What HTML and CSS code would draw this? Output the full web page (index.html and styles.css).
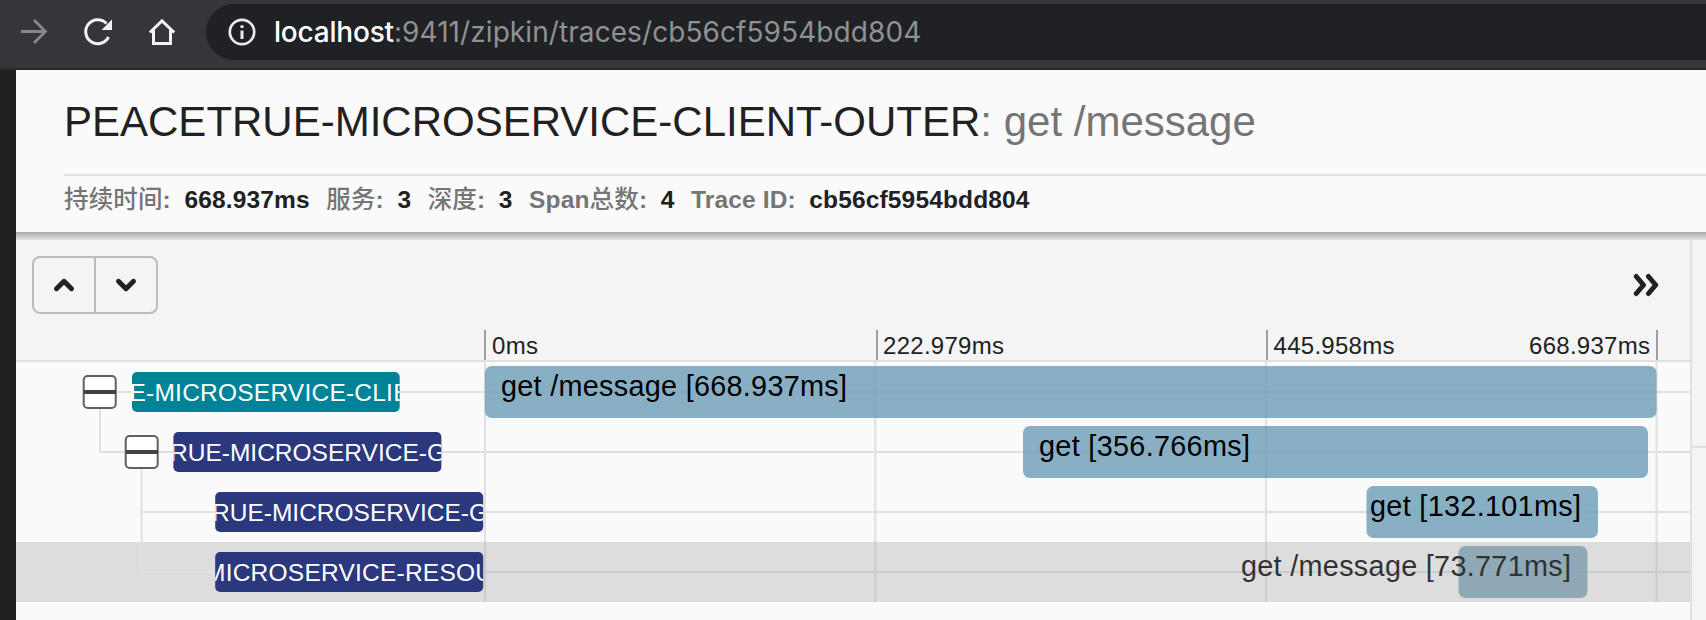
FILE: index.html
```html
<!DOCTYPE html>
<html lang="zh-CN">
<head>
<meta charset="utf-8">
<title>Zipkin</title>
<link rel="stylesheet" href="styles.css">
</head>
<body>
<div class="browser-bar">
  <svg class="nav-icons" width="206" height="68" viewBox="0 0 206 68" fill="none">
    <path d="M21 31.5H45M34 20L45.5 31.5L34 43" stroke="#87888a" stroke-width="2.8"/>
    <path d="M108.500 37A12 12 0 1 1 106.500 23.500" stroke="#f1f3f4" stroke-width="3"/>
    <path d="M112 19.500V30H101.500Z" fill="#f1f3f4"/>
    <path d="M149.800 32.500L162 20.800L174.200 32.500M153.500 30V43.500H170.500V30" stroke="#f1f3f4" stroke-width="3"/>
  </svg>
  <div class="omnibox">
    <svg width="28" height="28" viewBox="0 0 28 28" fill="none" stroke="#e8eaed">
      <circle cx="14" cy="14" r="12.200" stroke-width="2.700"/>
      <path d="M14 12.500V21M14 7.200V10" stroke-width="3"/>
    </svg>
    <div class="url"><span class="host">localhost</span><span class="path">:9411/zipkin/traces/cb56cf5954bdd804</span></div>
  </div>
</div>
<div class="app">
  <div class="sidebar"></div>
  <main class="content">
    <header class="trace-header">
      <h1 class="title"><span class="svc">PEACETRUE-MICROSERVICE-CLIENT-OUTER</span><span class="op">: get /message</span></h1>
      <dl class="meta">
        <div class="item"><dt><span class="cjk">持续时间</span>:</dt><dd>668.937ms</dd></div>
        <div class="item"><dt><span class="cjk">服务</span>:</dt><dd>3</dd></div>
        <div class="item"><dt><span class="cjk">深度</span>:</dt><dd>3</dd></div>
        <div class="item"><dt>Span<span class="cjk">总数</span>:</dt><dd>4</dd></div>
        <div class="item"><dt>Trace ID:</dt><dd>cb56cf5954bdd804</dd></div>
      </dl>
    </header>
    <div class="body">
      <section class="timeline">
        <div class="toolbar">
          <div class="button-group">
            <button class="btn" aria-label="Up"><svg width="24" height="18" viewBox="0 0 24 18"><path d="M4.500 12.700L12 5.300L19.500 12.700"/></svg></button>
            <button class="btn" aria-label="Down"><svg width="24" height="18" viewBox="0 0 24 18"><path d="M4.500 5.300L12 12.700L19.500 5.300"/></svg></button>
          </div>
          <svg class="expand" width="30" height="24" viewBox="0 0 30 24"><path d="M5.300 3.500L12.500 12L5.300 20.500M17.500 3.500L24.700 12L17.500 20.500"/></svg>
        </div>
        <svg class="chart" width="1674" height="290" viewBox="16 330 1674 290">
          <defs>
            <clipPath id="c1"><rect x="132" y="372" width="267.700" height="40" rx="5"/></clipPath>
            <clipPath id="c2"><rect x="173.400" y="432" width="268" height="40" rx="5"/></clipPath>
            <clipPath id="c3"><rect x="215.200" y="492" width="268" height="40" rx="5"/></clipPath>
            <clipPath id="c4"><rect x="215.200" y="552" width="268" height="40" rx="5"/></clipPath>
          </defs>
          <rect x="16" y="360" width="1674" height="260" fill="#fafafa"/>
          <path class="grid" d="M16 361H1690M485 362V602M875.300 362V602M1266 362V602M1656.500 362V602"/>
          <path class="grid" d="M100 392H1690M100 452H1690M142 512H1690M485 572H1690"/>
          <path class="tick" d="M485 330V360M877 330V360M1267 330V360M1657 330V360"/>
          <g class="tick-label">
            <text x="492" y="354" textLength="46">0ms</text>
            <text x="883" y="354" textLength="121">222.979ms</text>
            <text x="1273.500" y="354" textLength="121">445.958ms</text>
            <text x="1529" y="354" textLength="121">668.937ms</text>
          </g>
          <g class="bars">
            <rect x="484.800" y="366" width="1171.800" height="52" rx="7"/>
            <rect x="1023" y="426" width="625" height="52" rx="7"/>
            <rect x="1366.500" y="486" width="231.500" height="52" rx="7"/>
            <rect x="1458.500" y="546" width="129" height="52" rx="7"/>
          </g>
          <g class="bar-label">
            <text x="501" y="396" textLength="346">get /message [668.937ms]</text>
            <text x="1039" y="456" textLength="211">get [356.766ms]</text>
            <text x="1370" y="516" textLength="211">get [132.101ms]</text>
            <text x="1241" y="576" textLength="330">get /message [73.771ms]</text>
          </g>
          <rect x="16" y="542" width="1674" height="60" fill="#9e9e9e" fill-opacity=".31"/>
          <path class="grid" d="M100 392V452M141.500 452V572H216"/>
          <g class="toggle">
            <rect x="83.700" y="376" width="32" height="32" rx="4"/><path d="M84 392H116"/>
            <rect x="125.700" y="436" width="32" height="32" rx="4"/><path d="M126 452H158"/>
          </g>
          <g class="badge">
            <g clip-path="url(#c1)"><rect x="132" y="372" width="268" height="40" fill="#008396"/><text x="129.500" y="401" textLength="280">E-MICROSERVICE-CLIE</text></g>
            <g clip-path="url(#c2)"><rect x="173" y="432" width="269" height="40" fill="#2b387d"/><text x="170" y="461" textLength="276">RUE-MICROSERVICE-G</text></g>
            <g clip-path="url(#c3)"><rect x="215" y="492" width="269" height="40" fill="#2b387d"/><text x="212" y="521" textLength="276">RUE-MICROSERVICE-G</text></g>
            <g clip-path="url(#c4)"><rect x="215" y="552" width="269" height="40" fill="#2b387d"/><text x="205" y="581" textLength="288">MICROSERVICE-RESOU</text></g>
          </g>
        </svg>
      </section>
      <aside class="detail"><div class="detail-head"></div></aside>
    </div>
  </main>
</div>
</body>
</html>
```
FILE: styles.css
```css
* { box-sizing: border-box; }
body {
  margin: 0;
  width: 1706px;
  height: 620px;
  overflow: hidden;
  background: #fafafa;
  color: #212121;
  font-family: "Liberation Sans", "Noto Sans CJK SC", sans-serif;
}
.browser-bar {
  display: flex;
  height: 70px;
  background: #35363a;
  border-bottom: 2px solid #28292b;
}
.nav-icons { flex: none; }
.omnibox {
  flex: 1;
  display: flex;
  align-items: center;
  gap: 18px;
  height: 56px;
  margin-top: 4px;
  padding-left: 22px;
  border-radius: 28px 0 0 28px;
  background: #202124;
}
.url {
  font: 28px/56px Inter, sans-serif;
  white-space: nowrap;
  color: #8f9193;
}
.host { color: #fff; font-weight: 500; letter-spacing: -.2px; }
.path { letter-spacing: .08px; }
.app { display: flex; height: 550px; }
.sidebar { width: 16px; background: #212121; }
.content { flex: 1; min-width: 0; display: flex; flex-direction: column; }
.trace-header {
  height: 162px;
  padding-left: 48px;
  background: #fafafa;
}
.title {
  margin: 0;
  height: 106px;
  padding-top: 28px;
  border-bottom: 2px solid #e0e0e0;
  font-size: 42px;
  line-height: 48px;
  font-weight: 400;
  white-space: nowrap;
}
.op { color: #757575; }
.meta {
  display: flex;
  gap: 16.5px;
  margin: 0;
  padding-top: 8px;
  font-size: 24.5px;
  line-height: 32px;
  font-weight: 700;
  letter-spacing: .15px;
  white-space: nowrap;
}
.item { display: flex; gap: 13.5px; }
.meta dt { color: #757575; font-weight: 700; }
.meta dd { margin: 0; }
.cjk { font-family: "Noto Sans CJK SC", sans-serif; font-weight: 500; line-height: 1; }
.body {
  flex: 1;
  display: flex;
  background: linear-gradient(#a9a9a9, #e4e4e4 8px, #f4f4f4 8px);
}
.timeline { width: 1674px; padding-top: 8px; }
.toolbar {
  display: flex;
  justify-content: space-between;
  align-items: center;
  height: 90px;
  padding: 0 29px 0 16px;
}
.button-group {
  display: flex;
  width: 126px;
  height: 58px;
  border: 2px solid #bcbcbc;
  border-radius: 8px;
}
.btn {
  flex: 1;
  display: flex;
  align-items: center;
  justify-content: center;
  padding: 0;
  border: 0;
  background: none;
}
.btn + .btn { border-left: 2px solid #bcbcbc; }
.btn path, .expand path {
  fill: none;
  stroke: #212121;
  stroke-width: 5;
  stroke-linecap: round;
  stroke-linejoin: round;
}
.chart { display: block; }
.grid { fill: none; stroke: #e0e0e0; stroke-width: 2; }
.tick { stroke: #9e9e9e; stroke-width: 2; }
.tick-label { font-size: 24px; fill: #212121; }
.bars { fill: #6b9cb5; fill-opacity: .8; }
.bar-label { font-size: 28.8px; fill: #000; }
.toggle rect { fill: #fff; stroke: #606060; stroke-width: 2; }
.toggle path { stroke: #424242; stroke-width: 4; }
.badge { font-size: 24.5px; fill: #fff; }
.detail {
  flex: 1;
  margin-top: 8px;
  border-left: 2px solid #e0e0e0;
}
.detail-head { height: 208px; border-bottom: 2px solid #e0e0e0; }
```
